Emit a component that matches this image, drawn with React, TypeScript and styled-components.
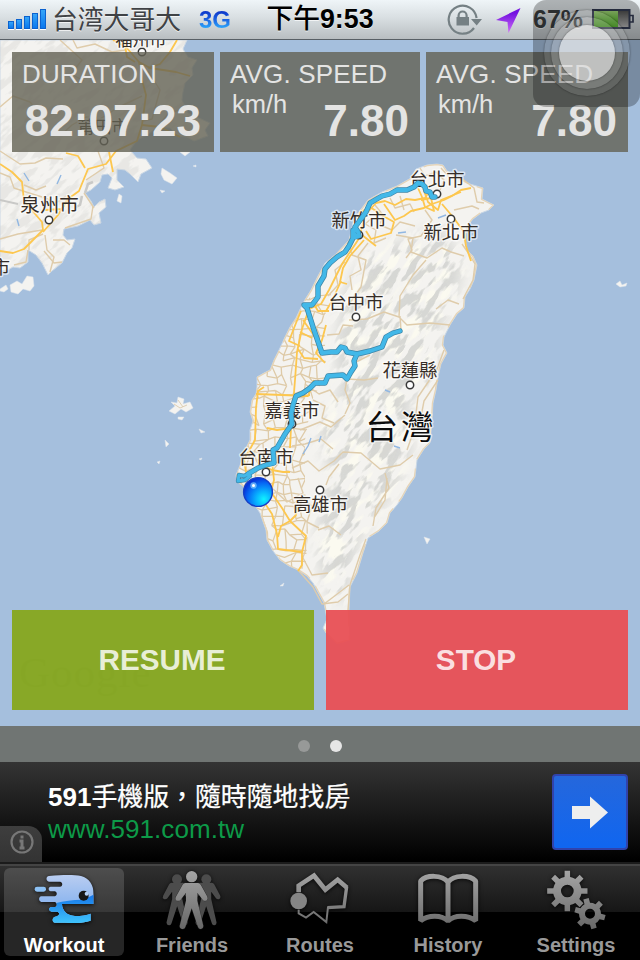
import { ReactNode, useState } from "react";
import styled, { createGlobalStyle } from "styled-components";

const GlobalStyle = createGlobalStyle`
  * {
    box-sizing: border-box;
  }
  body {
    margin: 0;
    background: #000;
    font-family: "Liberation Sans", "Noto Sans CJK TC", sans-serif;
  }
`;

const Screen = styled.div`
  position: relative;
  width: 640px;
  height: 960px;
  display: flex;
  flex-direction: column;
  overflow: hidden;
`;

/* status bar */

const StatusBar = styled.header`
  height: 40px;
  flex: none;
  display: grid;
  grid-template-columns: 240px 160px 240px;
  align-items: center;
  padding-bottom: 1px;
  background: linear-gradient(#eff5f8, #d9dfe2 45%, #b9bec1);
  border-bottom: 1px solid #596066;
  text-shadow: 0 1px 0 rgba(255, 255, 255, 0.7);
  white-space: nowrap;
`;

const StatusLeft = styled.div`
  display: flex;
  align-items: center;
  padding-left: 8px;
`;

const StatusRight = styled.div`
  display: flex;
  align-items: center;
  justify-content: flex-end;
  padding-right: 6px;
`;

const Signal = styled.div`
  display: flex;
  align-items: flex-end;
  gap: 2px;
  height: 20px;
  margin-right: 6px;
  filter: drop-shadow(0 1px 0 #fff);
`;

const SignalBar = styled.i<{ $height: number }>`
  width: 6px;
  height: ${(p) => p.$height}px;
  background: linear-gradient(#35a5f8, #0a78ee);
  border: 1px solid #0b62cf;
`;

const Carrier = styled.span`
  width: 147px;
  padding-top: 2px;
  font: 25.8px/36px "Liberation Sans", "Noto Sans CJK SC", sans-serif;
  color: #3f4245;
`;

const Network = styled.span`
  padding-top: 2px;
  font-size: 24px;
  font-weight: bold;
  line-height: 36px;
  background: linear-gradient(#0b2fc4 25%, #1b5fe0 50%, #2fb2ff 78%);
  background-clip: text;
  color: transparent;
  text-shadow: none;
`;

const Clock = styled.span`
  padding-top: 1px;
  text-align: center;
  font-size: 26.8px;
  font-weight: bold;
  line-height: 37px;
  color: #000;
`;

const ClockPrefix = styled.span`
  font-weight: 500;
`;

const Percent = styled.span`
  width: 57px;
  font-size: 25px;
  font-weight: bold;
  line-height: 38px;
  color: #3b3f42;
`;

/* map and overlays */

const MapArea = styled.main`
  position: relative;
  height: 686px;
  flex: none;
  display: flex;
  flex-direction: column;
  justify-content: space-between;
  padding: 12px 12px 16px;
`;

const MapCanvas = styled.svg`
  position: absolute;
  inset: 0;
`;

const Stats = styled.div`
  position: relative;
  display: grid;
  grid-template-columns: 202px 200px 202px;
  gap: 6px;
`;

const StatBox = styled.section`
  height: 100px;
  padding: 7px 10px 0;
  background: rgba(99, 97, 84, 0.8);
  color: #e4e4e3;
  white-space: nowrap;
`;

const StatName = styled.h2`
  margin: 0;
  font-size: 26px;
  font-weight: normal;
  line-height: 30px;
  letter-spacing: 0.15px;
`;

const StatRow = styled.div`
  display: flex;
  justify-content: space-between;
  padding-left: 2px;
`;

const StatUnit = styled.span`
  font-size: 25.5px;
  line-height: 30px;
`;

const StatValue = styled.strong<{ $inset: number }>`
  margin-left: auto;
  margin-right: ${(p) => p.$inset}px;
  padding-top: 7px;
  font-size: 44px;
  line-height: 50px;
`;

const Actions = styled.div`
  position: relative;
  display: grid;
  grid-template-columns: 1fr 1fr;
  gap: 12px;
`;

const ActionButton = styled.button<{ $color: string }>`
  height: 100px;
  border: 0;
  padding: 0 2px 0 0;
  background: ${(p) => p.$color};
  color: rgba(255, 255, 255, 0.83);
  font: bold 29.7px "Liberation Sans", sans-serif;
`;

const Pager = styled.div`
  height: 36px;
  flex: none;
  display: flex;
  justify-content: center;
  align-items: center;
  gap: 20px;
  padding-top: 4px;
  background: #707573;
`;

const Dot = styled.i<{ $on?: boolean }>`
  width: 12px;
  height: 12px;
  border-radius: 50%;
  background: ${(p) => (p.$on ? "#e6e6e6" : "#979998")};
`;

/* ad banner */

const Ad = styled.section`
  height: 102px;
  flex: none;
  display: flex;
  align-items: flex-start;
  background: linear-gradient(#343434, #000 98px);
  border-bottom: 2px solid #1b1b1b;
`;

const AdInfo = styled.span`
  width: 42px;
  height: 36px;
  align-self: flex-end;
  display: flex;
  align-items: center;
  padding: 0 0 4px 10px;
  border-top-right-radius: 14px;
  background: linear-gradient(#3e3e3e, #333);
`;

const AdText = styled.div`
  flex: 1;
  padding: 19px 0 0 6px;
  white-space: nowrap;
`;

const AdTitle = styled.div`
  font-size: 25.9px;
  line-height: 32px;
  color: #fff;
  -webkit-text-stroke: 0.25px #fff;

  b {
    font-size: 26px;
    -webkit-text-stroke: 0;
  }
`;

const AdLink = styled.div`
  font-size: 26px;
  line-height: 32px;
  letter-spacing: 0.08px;
  color: #0d9a48;
`;

const AdButton = styled.button`
  width: 76px;
  height: 76px;
  margin: 12px 12px 0 0;
  padding: 0;
  border: 2px solid #3043ad;
  border-radius: 4px;
  background: linear-gradient(#2567dc, #1066f0);

  svg {
    display: block;
  }
`;

/* tab bar */

const TabBar = styled.nav`
  height: 96px;
  flex: none;
  display: grid;
  grid-template-columns: repeat(5, 128px);
  background: linear-gradient(#444 2px, #303030 2px, #161616 48px, #000 48px);
`;

const Tab = styled.button<{ $active: boolean }>`
  height: 88px;
  margin: 4px;
  width: 120px;
  border: 0;
  padding: 0;
  border-radius: 6px;
  display: flex;
  flex-direction: column;
  align-items: center;
  background: ${(p) => (p.$active ? "rgba(255, 255, 255, 0.15)" : "none")};
  color: ${(p) => (p.$active ? "#fff" : "#999")};
  font: bold 20px/22px "Liberation Sans", sans-serif;

  svg {
    flex: none;
    margin-bottom: 6px;
    filter: drop-shadow(0 1px 2px rgba(0, 0, 0, 0.8));
  }
`;

/* floating assistive button */

const Assistive = styled.div`
  position: absolute;
  top: 0;
  right: 0;
  width: 107px;
  height: 107px;
  border-radius: 13px;
  background: rgba(0, 0, 0, 0.27);
`;

const Ring = styled.span<{ $r: number; $alpha: number }>`
  position: absolute;
  left: ${(p) => 54 - p.$r}px;
  top: ${(p) => 53 - p.$r}px;
  width: ${(p) => p.$r * 2}px;
  height: ${(p) => p.$r * 2}px;
  border-radius: 50%;
  background: rgba(255, 255, 255, ${(p) => p.$alpha});
  box-shadow: 0 0 2px rgba(0, 0, 0, 0.5);
`;

const TAIWAN =
  "437,164 443,165 447,171 457,177 470,184 483,188 482,199 494,205 489,210 481,213 473,219 468,225 465,237 467,250 473,256 477,265 474,280 470,289 465,297 464,308 457,314 450,325 444,337 443,345 447,353 441,364 438,377 436,390 433,403 432,420 430,443 424,449 417,460 415,477 408,487 402,498 397,505 390,513 387,523 379,531 368,538 363,553 357,573 350,587 349,610 350,640 337,644 326,633 323,628 327,619 324,603 313,583 307,576 298,570 289,566 280,560 273,551 267,540 266,530 260,513 254,504 248,495 243,486 237,482 236,475 241,463 244,452 250,440 250,430 253,421 250,412 252,400 256,394 257,387 257,377 264,373 270,370 274,360 280,348 285,337 290,327 296,318 303,303 311,290 318,276 325,263 336,254 349,240 353,223 359,212 368,200 382,192 397,186 411,178 416,169 427,165";

const CHINA =
  "0,40 187,40 183,49 188,57 197,60 192,68 193,75 185,83 183,92 182,100 188,113 199,118 210,123 205,130 208,136 194,141 187,137 178,136 170,128 157,127 149,134 137,140 130,150 137,158 146,159 152,168 141,174 138,182 130,174 125,170 117,169 117,180 124,187 115,190 108,188 112,178 108,174 102,175 100,182 91,190 85,193 91,201 94,207 99,202 105,199 106,207 99,213 101,223 94,225 90,220 78,226 64,229 63,235 67,240 75,239 72,248 67,253 62,263 52,271 48,275 42,263 36,255 28,250 28,262 20,268 13,267 8,270 0,271";

const ISLES = [
  "10,285 17,281 22,284 27,276 33,277 34,286 30,291 23,289 18,294 11,292",
  "0,289 6,285 8,289 4,292 0,291",
  "162,168 170,173 177,178 172,184 164,180 161,174",
  "119,194 122,196 121,203 117,201",
  "180,152 190,152 185,156",
  "178,397 184,399 183,404 190,402 193,408 186,412 181,409 175,414 169,411 175,406 171,402 177,403",
  "178,417 184,417 182,420 178,419",
  "165,440 169,444 166,447",
  "199,429 205,432 201,433",
  "157,462 160,461 159,464",
  "424,537 430,539 427,544",
  "280,586 284,583 283,586",
  "616,284 620,281 622,285 627,283 626,286 620,287",
  "199,459 202,458 201,460",
  "160,190 165,191 162,193",
  "193,166 196,165 196,167",
];

const ROUTE =
  "M435 197L432 197L430 192L426 191L425 187L422 184L418 183L414 187L407 190L397 190L390 194L382 196L375 200L370 203L366 212L358 223L355 227L358 232L359 236L355 237L353 230L353 238L349 246L345 252L337 257L330 263L325 269L324 276L318 286L318 297L312 305L304 305L307 308L314 330L322 353L331 352L337 352L341 347L345 348L347 352L357 354L370 351L382 347L386 337L393 333L400 331";

const BRANCH =
  "M357 354L354 361L355 366L351 372L347 379L343 375L328 376L325 383L315 383L310 388L303 393L296 396L293 405L291 414L292 424L285 434L277 448L273 450L274 463L266 465L258 468L248 474";

// out-and-back stretch on the coast, both tracks thinner than the rest
const LOOP = "M248 474L244 476L239 475L238 481L245 480L250 476";

const HIGHWAYS = [
  "M430 190L425 198L415 200L406 199L395 205L385 201L376 203L366 214L361 230L358 240L348 255L342 264L337 274L329 290L321 304L309 309L302 329L297 352L295 380L293 405L290 425L280 445L272 462L274 480L271 492L282 508L290 521",
  "M384 204L395 220L404 216L411 211L424 208L432 204L444 200L452 196L461 190L471 188",
  "M359 213L370 207L385 217L394 222L391 233L371 239L366 231",
  "M423 188L428 202L438 210L441 200L461 192",
  "M418 188L422 197L425 207L434 211L431 198L421 200",
  "M442 204L453 217L464 232L466 246L471 261",
  "M362 235L376 246M364 240L350 256L343 268L340 282L347 284",
  "M341 281L332 301L326 311M314 304L318 311L329 311M326 325L322 340L316 353L325 363",
  "M300 332L312 338M298 349L304 358L318 359",
  "M264 387L258 391L256 408L255 440L244 460L246 472",
  "M256 394L308 396L314 380M294 395L302 396L310 395",
  "M267 428L277 430L291 428L290 448M262 465L272 470L283 472L290 472",
  "M264 502L272 514L277 534L278 549L302 552L302 565L298 571",
  "M290 521L281 526L278 537M290 521L306 536L302 552M290 521L296 515L297 507",
  "M301 311L296 323L289 341L300 346M303 320L315 337",
  "M0 164L12 172L22 182L24 201L42 222L43 230L24 249L13 253L0 251",
  "M43 232L58 215L68 199L79 191L88 169L106 164L116 151L137 141L142 125L146 95L142 80L139 62L126 47L113 40",
  "M66 153L78 156L85 168M109 152L113 172M139 62L150 68L176 72L190 76",
  "M124 40L127 57L135 62M177 40L170 52L160 64L148 68M142 125L160 127L180 137",
  "M45 210L62 209L69 196",
];

const MINOR_ROADS = [
  "M406 258L412 250L408 239L421 236L432 220L425 210M349 244L352 255L366 260L361 287L347 307",
  "M396 235L413 238L411 252L427 258L442 248L451 252L464 256M426 260L413 275L400 296L399 317",
  "M399 317L384 312L367 319L349 320M399 317L407 325L430 323L450 325M400 316L401 330",
  "M327 335L339 334L343 325L353 326M354 363L370 355",
  "M347 379L364 380L378 378M347 379L345 390L350 403L345 414",
  "M436 309L448 300L459 304M444 350L437 369L418 397L414 430L407 450M438 380L424 401L420 422",
  "M292 468L308 461L319 471L334 461L343 452L361 453L380 469L400 465L413 455",
  "M339 464L329 477L326 485M385 473L389 488L376 508L373 526M387 478L385 500L374 518",
  "M318 530L329 526L341 535M302 556L312 575L328 573M298 570L313 587L322 604L338 602L348 594",
  "M349 585L332 598L324 604M366 539L360 555L350 585L348 610",
  "M441 168L450 178L460 177L474 188L477 202L484 203M454 210L472 206L479 209",
  "M292 446L305 444L321 439L333 449M300 430L320 422L331 427L345 415",
  "M304 499L312 506L307 522L319 528M273 489L287 502L303 493L298 478",
  "M462 244L469 254L475 264L473 280L463 299",
  "M420 168L425 176L436 172L444 180L440 190M375 205L383 215L380 225L392 230L400 222L415 226",
  "M390 198L395 208L410 204L414 212M400 196L404 210M372 218L365 224L376 230L374 243L386 238",
  "M368 243L358 256L361 270L350 276L352 290M345 262L335 270L338 285L328 296",
  "M313 400L325 406L322 418L334 423M305 384L319 394L330 390L338 402",
  "M0 173L10 177L14 188L26 192L42 197M0 239L18 234L30 232L42 230",
  "M0 151L20 164L35 163L46 158L63 159M60 40L82 60L71 74L84 81",
  "M0 107L13 96L30 102L38 111M61 135L72 125L86 117L100 119L117 108L142 96",
  "M45 235L47 250L54 257L50 272M53 240L64 240L70 245M93 206L91 219L65 228",
  "M29 250L29 240L43 234M62 262L54 263L44 251M84 193L94 208",
  "M98 151L104 168L86 180M148 71L160 90L152 119L143 121",
  "M183 109L169 113L158 126M73 40L77 48L95 44L112 52L125 50",
  "M24 185L36 190L46 186M43 197L56 203L66 196M28 250L26 262L14 265",
];

const LABELS: [string, number, number, number][] = [
  ["福州市", 141, 46, 17],
  ["莆田市", 103, 133, 17],
  ["泉州市", 49.5, 212, 19.5],
  ["市", 1, 274, 18],
  ["台北市", 437, 186, 18.3],
  ["新竹市", 359, 227, 18.3],
  ["新北市", 451, 239, 18.3],
  ["台中市", 356, 309, 18.3],
  ["花蓮縣", 410, 377, 18.3],
  ["嘉義市", 292, 417, 18.3],
  ["台南市", 266, 464, 18.3],
  ["高雄市", 320.5, 511, 18.3],
];

const TOWNS = [
  [142, 52], [104, 141], [49, 220], [437, 194], [359, 235], [451, 219],
  [356, 317], [410, 385], [292, 424], [266, 472], [320, 490],
];

// irregular street grid of the western plain
function streetMesh() {
  let seed = 17;
  const rand = () => {
    seed = (seed * 16807) % 2147483647;
    return seed / 2147483647 - 0.5;
  };
  const cols = 12;
  const rows = 37;
  const pts: number[][][] = [];
  for (let r = 0; r < rows; r++) {
    pts.push([]);
    for (let c = 0; c < cols; c++) {
      pts[r].push([230 + c * 9 + rand() * 8, 290 + r * 7.8 + rand() * 7]);
    }
  }
  let d = "";
  for (let r = 0; r < rows - 1; r++) {
    for (let c = 0; c < cols - 1; c++) {
      const [x, y] = pts[r][c];
      if (rand() < 0.32) d += `M${x} ${y}L${pts[r][c + 1].join(" ")}`;
      if (rand() < 0.32) d += `M${x} ${y}L${pts[r + 1][c].join(" ")}`;
    }
  }
  return d;
}

const MESH = streetMesh();

function RouteMap() {
  return (
    <MapCanvas width="640" height="686" viewBox="0 40 640 686">
      <defs>
        <clipPath id="taiwan"><polygon points={TAIWAN} /></clipPath>
        <clipPath id="china"><polygon points={CHINA} /></clipPath>
        <clipPath id="plain">
          <polygon points="300,300 334,292 325,330 326,375 312,400 305,440 305,480 308,530 305,575 230,560 225,470 240,380" />
        </clipPath>
        <filter id="shade" x="0" y="0" width="1" height="1" colorInterpolationFilters="sRGB">
          <feTurbulence type="fractalNoise" baseFrequency="0.045 0.13" numOctaves="3" seed="8" />
          <feColorMatrix values="0 0 0 0 .82  0 0 0 0 .825  0 0 0 0 .81  9 0 0 0 -4.4" />
        </filter>
        <filter id="light" x="0" y="0" width="1" height="1" colorInterpolationFilters="sRGB">
          <feTurbulence type="fractalNoise" baseFrequency="0.04 0.1" numOctaves="2" seed="31" />
          <feColorMatrix values="0 0 0 0 .985  0 0 0 0 .98  0 0 0 0 .94  7 0 0 0 -3.4" />
        </filter>
        <filter id="soft"><feGaussianBlur stdDeviation="7" /></filter>
        <mask id="hills">
          <polygon
            filter="url(#soft)"
            fill="#fff"
            points="440,225 464,265 455,300 438,330 436,375 408,405 412,450 395,490 360,535 345,600 330,600 318,560 318,520 330,470 318,430 340,390 335,350 345,290 370,250 410,240"
          />
        </mask>
        <radialGradient id="ball" cx="0.7" cy="0.75" r="0.75">
          <stop offset="0" stopColor="#10f2ff" />
          <stop offset="0.35" stopColor="#08b4ff" />
          <stop offset="0.75" stopColor="#0667f4" />
          <stop offset="1" stopColor="#0634d8" />
        </radialGradient>
      </defs>

      <rect y="40" width="640" height="686" fill="#a5bfdd" />
      <g fill="#f4f3f0" stroke="#c9d7e6" strokeWidth="1" strokeLinejoin="round">
        <polygon points={CHINA} />
        <polygon points={TAIWAN} />
        {ISLES.map((points) => <polygon key={points} points={points} stroke="#dfe5ec" strokeWidth="0.5" />)}
      </g>
      <path d="M174 404L180 408L187 405M178 400L183 407" fill="none" stroke="#dfcfb4" />

      <g clipPath="url(#taiwan)">
        <g mask="url(#hills)">
          <g transform="rotate(-52 380 400)">
            <rect x="130" y="200" width="500" height="420" filter="url(#light)" />
            <rect x="130" y="200" width="500" height="420" filter="url(#shade)" opacity="0.85" />
          </g>
        </g>
      </g>
      <g clipPath="url(#china)" opacity="0.35">
        <g transform="rotate(-40 90 140)">
          <rect x="-80" y="-40" width="340" height="380" filter="url(#shade)" />
        </g>
      </g>

      <g fill="none" strokeLinejoin="round">
        <g clipPath="url(#taiwan)">
          <path d={MESH} clipPath="url(#plain)" stroke="#decaa7" strokeWidth="1.3" />
          <polygon points={TAIWAN} stroke="#e6d4b6" strokeWidth="2.4" strokeDasharray="38 9" />
        </g>
        {MINOR_ROADS.map((d) => <path key={d} d={d} stroke="#dfccab" strokeWidth="1.4" />)}
        {HIGHWAYS.map((d) => <path key={d} d={d} stroke="#fdc74f" strokeWidth="1.8" />)}
        <path d="M82 196L80 205L76 207M85 193L88 184L93 182" stroke="#c9c9c7" strokeWidth="2.5" />
        <path d="M0 200L18 204" stroke="#c9c9c7" strokeWidth="2" />
        <path
          d="M303 454L308 446L311 438M321 436L319 442M398 233L406 232M438 218L446 215M385 390L390 392M24 173L29 181M17 219L19 226M57 184L61 175M394 446L400 448"
          stroke="#91b7e2"
          strokeWidth="1.4"
        />
      </g>

      <g fill="#fff" stroke="#383838" strokeWidth="1.5">
        {TOWNS.map(([x, y]) => <circle key={x + "-" + y} cx={x} cy={y} r="3.7" />)}
      </g>
      <g
        fill="#352d27"
        stroke="#fff"
        strokeOpacity="0.6"
        strokeWidth="3"
        strokeLinejoin="round"
        paintOrder="stroke"
        textAnchor="middle"
        fontFamily='"Noto Sans CJK TC", sans-serif'
      >
        {LABELS.map(([name, x, y, size]) => (
          <text key={name} x={x} y={y} fontSize={size}>{name}</text>
        ))}
        <text x="401" y="439" fontSize="32.5" letterSpacing="3" fill="#0c0c0c">台灣</text>
      </g>

      <g fill="none" strokeLinejoin="round" strokeLinecap="round">
        <path d={ROUTE + BRANCH} stroke="#3e86a8" strokeWidth="5.4" />
        <path d={LOOP} stroke="#3e86a8" strokeWidth="4.4" />
        <path d={ROUTE + BRANCH} stroke="#42b8e8" strokeWidth="3.9" />
        <path d={LOOP} stroke="#42b8e8" strokeWidth="3" />
      </g>

      <circle cx="258" cy="492" r="14.4" fill="url(#ball)" stroke="#173fc5" strokeWidth="1.4" />
      <circle cx="253.5" cy="485.5" r="3.2" fill="#8dd7ff" opacity="0.65" />
      <circle cx="253.5" cy="485.5" r="1.5" fill="#fff" />

      <text x="19" y="687" fontFamily='"Liberation Serif", serif' fontSize="43" letterSpacing="1" fill="#8ba3c2">
        Google
      </text>
    </MapCanvas>
  );
}

function gear(cx: number, cy: number, outer: number, inner: number, hole: number, teeth: number, phase: number) {
  const at = (r: number, deg: number) => {
    const a = (deg * Math.PI) / 180;
    return `${cx + r * Math.cos(a)} ${cy + r * Math.sin(a)}`;
  };
  const step = 360 / teeth;
  let d = "";
  for (let i = 0; i < teeth; i++) {
    const a = phase + i * step;
    d += `${i ? "L" : "M"}${at(inner, a - step * 0.25)}L${at(outer, a - step * 0.17)}L${at(outer, a + step * 0.17)}`;
    d += `L${at(inner, a + step * 0.25)}A${inner} ${inner} 0 0 1 ${at(inner, a + step * 0.75)}`;
  }
  return `${d}ZM${cx - hole} ${cy}a${hole} ${hole} 0 1 0 ${hole * 2} 0a${hole} ${hole} 0 1 0 ${-hole * 2} 0Z`;
}

const BODY =
  "M558 69H596Q601 69 604 74L624 110Q627 118 621 122Q614 124 610 119L594 98V122L612 198Q612 206 605 207Q598 208 596 201L577 145L558 201Q556 208 549 207Q541 206 541 198L560 122V98L544 119Q540 124 532 122Q526 118 530 110L550 74Q553 69 558 69Z";

const icons: Record<string, [number, ReactNode]> = {
  Workout: [0, (
    <>
      <defs>
        <linearGradient id="helmet" x1="0" y1="45" x2="0" y2="190" gradientUnits="userSpaceOnUse">
          <stop offset="0" stopColor="#b9cdf1" />
          <stop offset="0.5" stopColor="#93b9ef" />
        </linearGradient>
        <linearGradient id="jaw" x1="0" y1="105" x2="0" y2="190" gradientUnits="userSpaceOnUse">
          <stop offset="0" stopColor="#1676e8" />
          <stop offset="1" stopColor="#40c4fc" />
        </linearGradient>
        <clipPath id="face">
          <path d="M147 48C190 44 222 44 243 48C268 55 281 75 281 102V132H186C187 152 200 166 225 168C245 168 260 165 272 161V182C250 190 225 190 195 188H165C155 187 156 172 165 170C181 168 180 156 170 155H155C145 153 145 142 155 141H165C172 140 172 128 165 126H124C115 124 115 110 124 109H165C172 107 172 96 165 94H152C144 93 144 81 152 80H180C189 79 189 66 180 65H147C137 64 137 49 147 48Z" />
        </clipPath>
      </defs>
      <g clipPath="url(#face)">
        <rect x="100" y="40" width="190" height="155" fill="url(#helmet)" />
        <path d="M100 143L165 130Q210 118 250 119L290 100V195H100Z" fill="url(#jaw)" />
      </g>
      <rect x="104" y="80" width="34" height="15" rx="7" fill="#8dc1f4" />
      <circle cx="251" cy="107" r="15" fill="#171717" />
      <circle cx="260" cy="101" r="6" fill="#b4d0f6" />
    </>
  )],
  Friends: [386, (
    <>
      <g fill="#4c4c4c">
        <circle cx="533" cy="58" r="15" />
        <circle cx="621" cy="58" r="15" />
        <path d={BODY} transform="translate(20 5) scale(.89 .92)" />
        <path d={BODY} transform="translate(107 5) scale(.89 .92)" />
      </g>
      <g fill="url(#steel)" stroke="#222" strokeWidth="2" paintOrder="stroke">
        <circle cx="577" cy="50" r="17" />
        <path d={BODY} />
      </g>
    </>
  )],
  Routes: [78, (
    <>
      <g fill="none" stroke="url(#steel)">
        <path d="M206 97V77L252 47L286 89L323 59L351 83" strokeWidth="14" />
        <path d="M350 80L342 140L292 143" strokeWidth="10" />
        <path d="M294 141L289 186L251 156L228 173L206 160V149" strokeWidth="6" />
      </g>
      <circle cx="206" cy="123" r="25" fill="#858585" />
    </>
  )],
  History: [462, (
    <path
      d="M654 66C635 44 590 44 572 63V182C595 164 635 164 654 183C673 164 713 164 737 182V63C718 44 673 44 654 66V185"
      fill="none"
      stroke="url(#steel)"
      strokeWidth="15"
      strokeLinejoin="bevel"
    />
  )],
  Settings: [156, (
    <g fill="url(#steel)" fillRule="evenodd">
      <path d={gear(322, 93, 61, 43, 19, 8, 0)} />
      <path d={gear(390, 161, 47, 33, 15, 6, 15)} />
    </g>
  )],
};

export default function App() {
  const [tab, setTab] = useState("Workout");

  return (
    <Screen>
      <GlobalStyle />
      <StatusBar>
        <StatusLeft>
          <Signal>
            {[8, 10, 13, 16, 20].map((h) => <SignalBar key={h} $height={h} />)}
          </Signal>
          <Carrier>台湾大哥大</Carrier>
          <Network>3G</Network>
        </StatusLeft>
        <Clock><ClockPrefix>下午</ClockPrefix>9:53</Clock>
        <StatusRight>
          <svg width="86" height="38" viewBox="446 0 86 38">
            <g fill="none" stroke="#758084" strokeWidth="2.2">
              <path d="M473 28A14 14 0 1 1 475.6 18" />
              <path d="M457.6 18V15.5A4 4 0 0 1 465.6 15.5V18" />
            </g>
            <path d="M470 19H481L475.7 25.5ZM455.5 17H468V25.500H455.5Z" fill="#758084" />
            <path d="M495 20L519.5 8L507.5 33L506.5 22Z" fill="url(#arrow)" />
            <linearGradient id="arrow" x2="0" y2="1">
              <stop offset="0.2" stopColor="#7412e0" />
              <stop offset="1" stopColor="#cf6df8" />
            </linearGradient>
          </svg>
          <Percent>67%</Percent>
          <svg width="44" height="38" viewBox="590 0 44 38">
            <linearGradient id="charge" x2="0" y2="1">
              <stop offset="0" stopColor="#a5dc7b" />
              <stop offset="0.5" stopColor="#6fc245" />
              <stop offset="1" stopColor="#46ab17" />
            </linearGradient>
            <linearGradient id="drained" x2="0" y2="1">
              <stop offset="0" stopColor="#4d4d4d" />
              <stop offset="1" stopColor="#bbb" />
            </linearGradient>
            <rect x="593" y="10" width="36.5" height="18" fill="url(#drained)" stroke="#343c54" strokeWidth="2" />
            <rect x="594" y="11" width="24" height="16" fill="url(#charge)" />
            <path d="M630 15.5H633V22H630" fill="none" stroke="#343c54" strokeWidth="1.7" />
          </svg>
        </StatusRight>
      </StatusBar>

      <MapArea>
        <RouteMap />
        <Stats>
          <StatBox>
            <StatName>DURATION</StatName>
            <StatRow>
              <StatValue $inset={3}>82:07:23</StatValue>
            </StatRow>
          </StatBox>
          {[0, 1].map((n) => (
            <StatBox key={n}>
              <StatName>AVG. SPEED</StatName>
              <StatRow>
                <StatUnit>km/h</StatUnit>
                <StatValue $inset={1}>7.80</StatValue>
              </StatRow>
            </StatBox>
          ))}
        </Stats>
        <Actions>
          <ActionButton $color="rgba(134, 166, 28, 0.95)">RESUME</ActionButton>
          <ActionButton $color="rgba(232, 79, 84, 0.95)">STOP</ActionButton>
        </Actions>
      </MapArea>

      <Pager>
        <Dot />
        <Dot $on />
      </Pager>

      <Ad>
        <AdInfo>
          <svg width="24" height="24" viewBox="0 0 24 24">
            <circle cx="12" cy="12" r="10.5" fill="none" stroke="#777" strokeWidth="2.2" />
            <path d="M12 5.5V8.5M9.5 11H12V18M9.5 18H14.5" fill="none" stroke="#777" strokeWidth="3" />
          </svg>
        </AdInfo>
        <AdText>
          <AdTitle><b>591</b>手機版，隨時隨地找房</AdTitle>
          <AdLink>www.591.com.tw</AdLink>
        </AdText>
        <AdButton>
          <svg width="72" height="72" viewBox="554 776 72 72">
            <path d="M572 806H590V796.5L608 812.5L590 828.5V819H572Z" fill="#eee" />
          </svg>
        </AdButton>
      </Ad>

      <TabBar>
        {Object.entries(icons).map(([name, [x, drawing]]) => (
          <Tab key={name} $active={tab === name} onClick={() => setTab(name)}>
            <svg width="120" height="60" viewBox={`${x + 12} 24 360 180`} overflow="visible">
              <defs>
                <linearGradient id="steel" x1="0" y1="30" x2="0" y2="205" gradientUnits="userSpaceOnUse">
                  <stop offset="0" stopColor="#a6a6a6" />
                  <stop offset="1" stopColor="#686868" />
                </linearGradient>
              </defs>
              {drawing}
            </svg>
            {name}
          </Tab>
        ))}
      </TabBar>

      <Assistive>
        <Ring $r={43} $alpha={0.1} />
        <Ring $r={36} $alpha={0.15} />
        <Ring $r={28} $alpha={0.52} />
      </Assistive>
    </Screen>
  );
}
